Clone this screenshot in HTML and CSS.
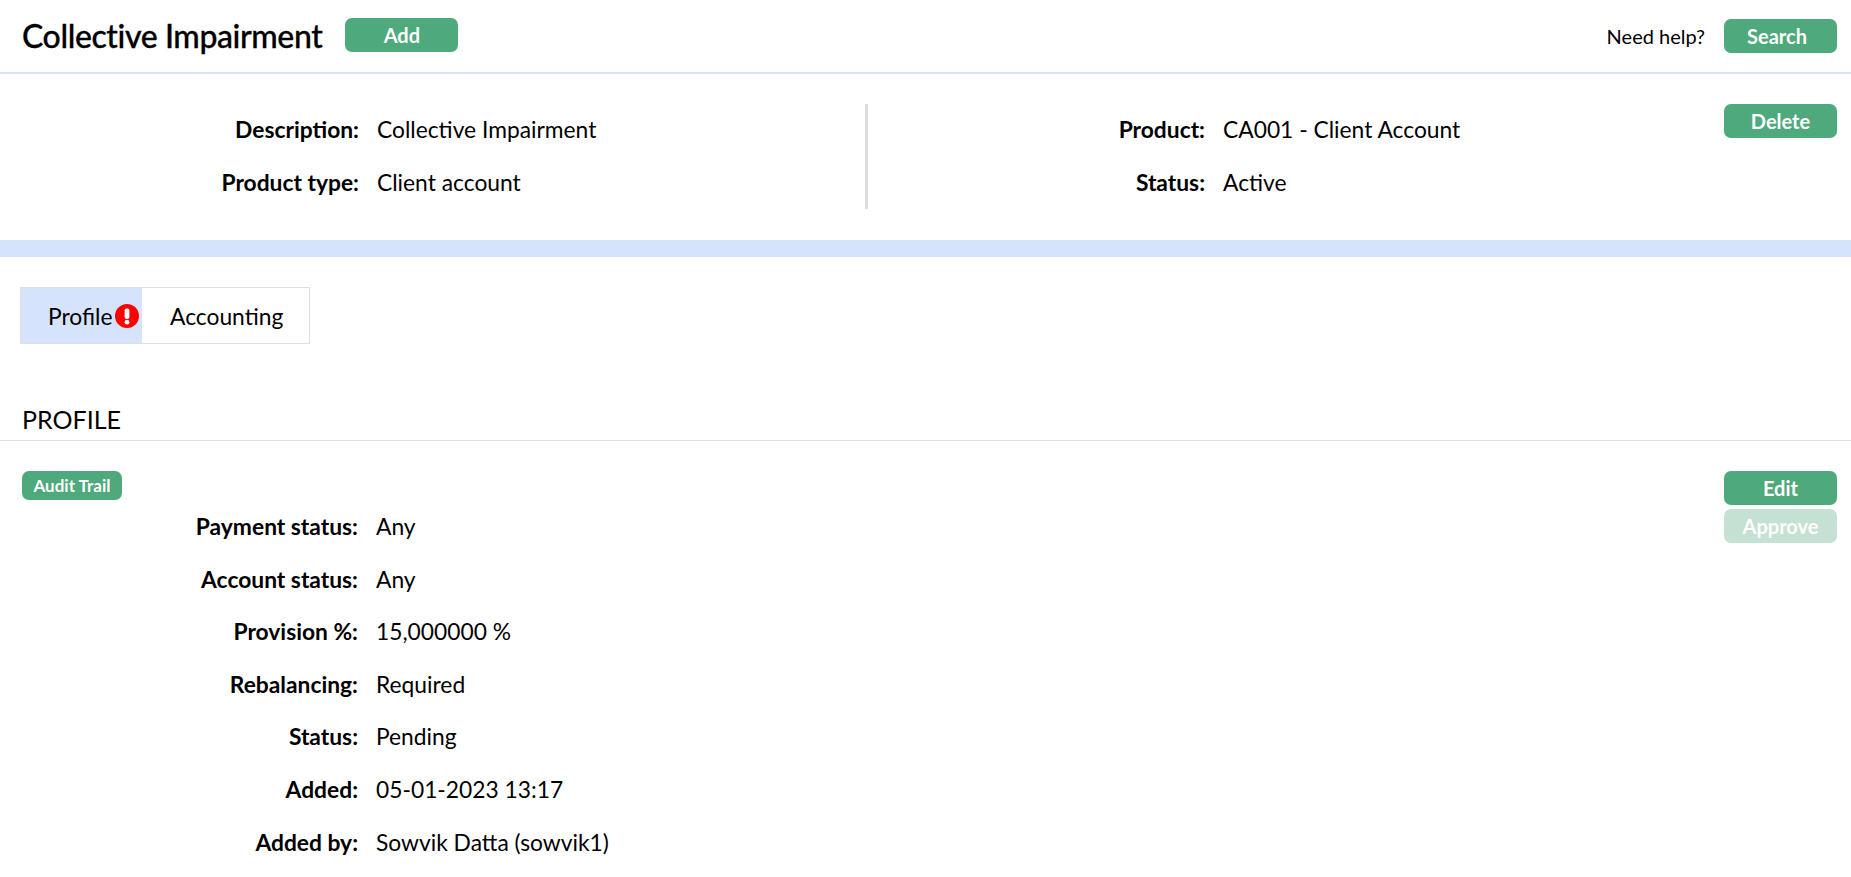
FILE: index.html
```html
<!DOCTYPE html>
<html lang="en">
  <head>
    <meta charset="UTF-8" />
    <title>Collective Impairment</title>
    <link rel="stylesheet" href="styles.css">
  </head>
  <body>
    <header class="topbar">
      <h1>Collective Impairment</h1>
      <button class="btn btn-add">Add</button>
      <span class="help">Need help?</span>
      <button class="btn btn-search">Search</button>
    </header>

    <section class="summary">
      <div class="summary-col summary-left">
        <div class="field"><span class="label">Description:</span><span class="value">Collective Impairment</span></div>
        <div class="field"><span class="label">Product type:</span><span class="value">Client account</span></div>
      </div>
      <div class="summary-col summary-right">
        <div class="field"><span class="label">Product:</span><span class="value">CA001 - Client Account</span></div>
        <div class="field"><span class="label">Status:</span><span class="value">Active</span></div>
      </div>
      <button class="btn">Delete</button>
    </section>

    <div class="band"></div>

    <nav class="tabs">
      <a class="tab tab-active">Profile<svg class="alert" viewBox="0 0 24 24" width="24" height="24"><circle cx="12" cy="12" r="12" fill="#fe0000"/><rect x="9.6" y="4.5" width="4.8" height="10.5" rx="2" fill="#fff"/><circle cx="12" cy="18.2" r="2.4" fill="#fff"/></svg></a>
      <a class="tab tab-plain">Accounting</a>
    </nav>

    <h2 class="section-title">PROFILE</h2>

    <section class="profile">
      <div class="profile-main">
        <button class="btn btn-small">Audit Trail</button>
        <div class="details">
          <div class="field"><span class="label">Payment status:</span><span class="value">Any</span></div>
          <div class="field"><span class="label">Account status:</span><span class="value">Any</span></div>
          <div class="field"><span class="label">Provision %:</span><span class="value">15,000000 %</span></div>
          <div class="field"><span class="label">Rebalancing:</span><span class="value">Required</span></div>
          <div class="field"><span class="label">Status:</span><span class="value">Pending</span></div>
          <div class="field"><span class="label">Added:</span><span class="value">05-01-2023 13:17</span></div>
          <div class="field"><span class="label">Added by:</span><span class="value">Sowvik Datta (sowvik1)</span></div>
        </div>
      </div>
      <div class="profile-actions">
        <button class="btn btn-edit">Edit</button>
        <button class="btn btn-disabled">Approve</button>
      </div>
    </section>
  </body>
</html>
```

FILE: styles.css
```css
body {
  margin: 0;
  padding: 0;
  font-family: "Lato", "Open Sans", sans-serif;
  font-size: 22.8px;
  background-color: #fff;
  color: #000;
}

.btn {
  width: 113px;
  height: 34px;
  padding: 0;
  border: none;
  border-radius: 7px;
  background-color: #4ea97c;
  color: #fff;
  font-family: inherit;
  font-size: 20px;
  font-weight: bold;
}

.topbar {
  display: flex;
  align-items: center;
  height: 72px;
  padding: 0 14px 0 22px;
  border-bottom: 2px solid #d5e3fc;
}

.topbar h1 {
  margin: -2px 23px 0 0;
  font-size: 32px;
  font-weight: 500;
  letter-spacing: -0.4px;
  -webkit-text-stroke: 0.3px #000;
}

.btn-add {
  margin-top: -2px;
}

.btn-search {
  padding-right: 7px;
}

.help {
  margin-left: auto;
  margin-right: 19px;
  font-size: 20px;
}

.summary {
  display: flex;
  height: 166px;
  padding: 30px 14px 0 0;
  box-sizing: border-box;
}

.summary-col {
  display: flex;
  flex-direction: column;
  gap: 21px;
  height: 105px;
  padding-top: 9px;
  box-sizing: border-box;
}

.summary-left {
  width: 868px;
  border-right: 3px solid #dcdcdc;
}

.summary-right {
  flex: 1;
}

.field {
  display: flex;
  height: 32px;
  line-height: 32px;
}

.label {
  font-weight: bold;
  text-align: right;
}

.value {
  margin-left: 18px;
}

.summary-left .label {
  width: 359px;
}

.summary-right .label {
  width: 337px;
}

.band {
  height: 17px;
  background-color: #d5e3fc;
}

.tabs {
  display: inline-flex;
  margin: 30px 0 0 20px;
  border: 1px solid #dfdfdf;
  height: 55px;
}

.tab {
  display: flex;
  align-items: center;
  box-sizing: border-box;
  height: 100%;
}

.tab-active {
  width: 121px;
  padding-left: 27px;
  background-color: #d5e3fc;
}

.tab-plain {
  width: 167px;
  padding-left: 28px;
}

.alert {
  margin-left: 3px;
  flex-shrink: 0;
}

.section-title {
  margin: 60px 0 0;
  padding: 0 0 6px 22px;
  font-size: 25px;
  font-weight: normal;
  line-height: 30px;
  border-bottom: 1px solid #dfdfdf;
}

.profile {
  display: flex;
  justify-content: space-between;
  padding: 30px 14px 0 22px;
}

.btn-small {
  display: block;
  width: 100px;
  height: 29px;
  font-size: 17px;
}

.details {
  margin-top: 10px;
}

.details .field {
  margin-bottom: 20.6px;
}

.details .label {
  width: 336px;
}

.profile-actions {
  display: flex;
  flex-direction: column;
  gap: 4px;
}

.btn-disabled {
  background-color: #c4e1d3;
}
```
